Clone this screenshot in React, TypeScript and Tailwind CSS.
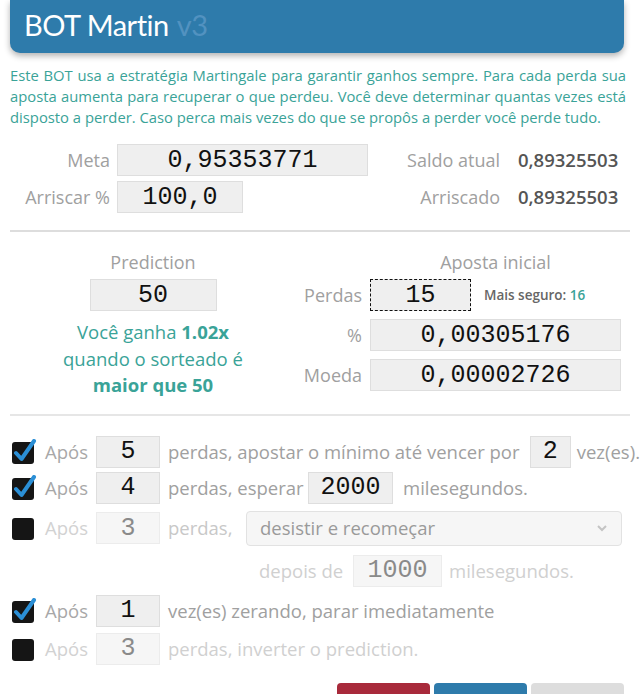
import React from "react";

const sans = "font-['Open_Sans','Liberation_Sans',sans-serif]";
const mono = "font-['Liberation_Mono','Courier_New',monospace]";

const Check: React.FC<{ on: boolean }> = ({ on }) => (
  <svg width="26" height="26" viewBox="0 0 26 26" className="shrink-0">
    <rect x="1" y="3" width="22" height="22" rx="3" fill="#151515" />
    {on && (
      <path
        d="M5 14 L10.5 20 L23 2"
        fill="none"
        stroke="#2b8fd6"
        strokeWidth="4"
        strokeLinecap="round"
        strokeLinejoin="round"
      />
    )}
  </svg>
);

const Box: React.FC<{ value: string; w: string; dim?: boolean; dashed?: boolean }> = ({
  value,
  w,
  dim,
  dashed,
}) => {
  let look = "bg-[#efefef] border border-[#dedede] text-[#111]";
  if (dim) look = "bg-[#f6f6f6] border border-[#ececec] text-[#8a8a8a]";
  if (dashed) look = "bg-[#efefef] border border-dashed border-[#111] text-[#111]";
  return (
    <div className={`${w} h-[32px] shrink-0 flex items-center justify-center ${mono} text-[25px] leading-none ${look}`}>
      {value}
    </div>
  );
};

const lines = [
  "Este BOT usa a estratégia Martingale para garantir ganhos sempre. Para cada perda sua",
  "aposta aumenta para recuperar o que perdeu. Você deve determinar quantas vezes está",
];

export default function App() {
  return (
    <div className={`w-[640px] bg-white ${sans} overflow-hidden`}>
      {/* Header */}
      <div className="ml-[10px] mr-[16px] h-[53px] bg-[#2e7bab] rounded-b-[10px] shadow-[0_3px_6px_rgba(0,0,0,0.3)] flex items-center pl-[14px] pb-[4px] font-['Lato',sans-serif]">
        <span className="text-[29px] text-white tracking-[-0.5px]">BOT Martin</span>
        <span className="text-[29px] text-[#5292c0] ml-[8px] tracking-[-0.5px]">v3</span>
      </div>

      {/* Description */}
      <div className="ml-[10px] mr-[14px] mt-[12px] text-[14.8px] leading-[21px] text-[#3aa398] whitespace-nowrap">
        {lines.map((l) => (
          <div key={l} className="text-justify [text-align-last:justify]">
            {l}
          </div>
        ))}
        <div>disposto a perder. Caso perca mais vezes do que se propôs a perder você perde tudo.</div>
      </div>

      {/* Meta / Arriscar */}
      <div className="mx-[10px] mt-[16px] flex flex-col gap-[5px] text-[18px]">
        <div className="flex items-center">
          <span className="w-[100px] text-right text-[#a0a0a0]">Meta</span>
          <div className="ml-[7px]">
            <Box value="0,95353771" w="w-[251px]" />
          </div>
          <span className="w-[132px] text-right text-[#a0a0a0]">Saldo atual</span>
          <span className="ml-[18px] text-[18.5px] font-semibold text-[#555]">0,89325503</span>
        </div>
        <div className="flex items-center">
          <span className="w-[100px] text-right text-[#a0a0a0]">Arriscar %</span>
          <div className="ml-[7px]">
            <Box value="100,0" w="w-[126px]" />
          </div>
          <span className="w-[257px] text-right text-[#a0a0a0]">Arriscado</span>
          <span className="ml-[18px] text-[18.5px] font-semibold text-[#555]">0,89325503</span>
        </div>
      </div>

      <div className="mx-[10px] mt-[17px] h-[2px] bg-[#dddddd]" />

      {/* Prediction / Aposta inicial */}
      <div className="mx-[10px] mt-[18px] flex">
        <div className="w-[286px] flex flex-col items-center">
          <span className="text-[18px] leading-[24px] text-[#a0a0a0]">Prediction</span>
          <div className="mt-[5px]">
            <Box value="50" w="w-[127px]" />
          </div>
          <div className="mt-[8px] text-[18.5px] leading-[26.5px] text-[#3aa398] text-center">
            <div>
              Você ganha <b>1.02x</b>
            </div>
            <div>quando o sorteado é</div>
            <div className="font-bold">maior que 50</div>
          </div>
        </div>
        <div className="flex-1">
          <div className="pl-[74px] w-[325px] text-center text-[18px] leading-[24px] text-[#a0a0a0]">
            Aposta inicial
          </div>
          <div className="mt-[5px] flex flex-col gap-[8px] text-[18px]">
            <div className="flex items-center">
              <span className="w-[66px] text-right text-[#a0a0a0]">Perdas</span>
              <div className="ml-[8px]">
                <Box value="15" w="w-[101px]" dashed />
              </div>
              <span className="ml-[13px] text-[13.5px] font-semibold text-[#666]">
                Mais seguro: <span className="text-[#3aa398]">16</span>
              </span>
            </div>
            <div className="flex items-center">
              <span className="w-[66px] text-right text-[#a0a0a0]">%</span>
              <div className="ml-[8px]">
                <Box value="0,00305176" w="w-[251px]" />
              </div>
            </div>
            <div className="flex items-center">
              <span className="w-[66px] text-right text-[#a0a0a0]">Moeda</span>
              <div className="ml-[8px]">
                <Box value="0,00002726" w="w-[251px]" />
              </div>
            </div>
          </div>
        </div>
      </div>

      <div className="mx-[10px] mt-[15px] h-[2px] bg-[#e6e6e6]" />

      {/* Options */}
      <div className="ml-[11px] mt-[20px] flex flex-col text-[18.5px] whitespace-nowrap">
        <div className="h-[32px] flex items-center">
          <Check on />
          <span className="ml-[8px] w-[51px] text-[#a8a8a8]">Após</span>
          <Box value="5" w="w-[64px]" />
          <span className="ml-[8px] w-[362px] text-[#a0a0a0]">perdas, apostar o mínimo até vencer por</span>
          <Box value="2" w="w-[41px]" />
          <span className="ml-[6px] text-[#a0a0a0]">vez(es).</span>
        </div>
        <div className="mt-[4px] h-[32px] flex items-center">
          <Check on />
          <span className="ml-[8px] w-[51px] text-[#a8a8a8]">Após</span>
          <Box value="4" w="w-[64px]" />
          <span className="ml-[8px] w-[140px] text-[#a0a0a0]">perdas, esperar</span>
          <Box value="2000" w="w-[85px]" />
          <span className="ml-[10px] text-[#a0a0a0]">milesegundos.</span>
        </div>
        <div className="mt-[7px] h-[35px] flex items-center">
          <Check on={false} />
          <span className="ml-[8px] w-[51px] text-[#d2d2d2]">Após</span>
          <Box value="3" w="w-[64px]" dim />
          <span className="ml-[8px] w-[78px] text-[#c8c8c8]">perdas,</span>
          <div className="w-[376px] h-[35px] rounded-[4px] border border-[#e2e2e2] bg-[#f6f6f6] flex items-center justify-between px-[13px]">
            <span className="text-[#9a9a9a]">desistir e recomeçar</span>
            <svg width="12" height="8" viewBox="0 0 12 8">
              <path d="M2 2 L6 6 L10 2" fill="none" stroke="#c4c4c4" strokeWidth="2" />
            </svg>
          </div>
        </div>
        <div className="mt-[9px] h-[32px] flex items-center pl-[248px]">
          <span className="w-[94px] text-[#d0d0d0]">depois de</span>
          <Box value="1000" w="w-[89px]" dim />
          <span className="ml-[7px] text-[#d0d0d0]">milesegundos.</span>
        </div>
        <div className="mt-[8px] h-[32px] flex items-center">
          <Check on />
          <span className="ml-[8px] w-[51px] text-[#a8a8a8]">Após</span>
          <Box value="1" w="w-[64px]" />
          <span className="ml-[8px] text-[#a0a0a0]">vez(es) zerando, parar imediatamente</span>
        </div>
        <div className="mt-[6px] h-[32px] flex items-center">
          <Check on={false} />
          <span className="ml-[8px] w-[51px] text-[#d2d2d2]">Após</span>
          <Box value="3" w="w-[64px]" dim />
          <span className="ml-[8px] text-[#d0d0d0]">perdas, inverter o prediction.</span>
        </div>
      </div>

      {/* Buttons */}
      <div className="mt-[18px] mr-[16px] flex justify-end gap-[4px]">
        <button className="w-[93px] h-[40px] rounded-[4px] bg-[#a82a3b]" />
        <button className="w-[93px] h-[40px] rounded-[4px] bg-[#2e7bab]" />
        <button className="w-[93px] h-[40px] rounded-[4px] bg-[#dddddd]" />
      </div>
    </div>
  );
}
